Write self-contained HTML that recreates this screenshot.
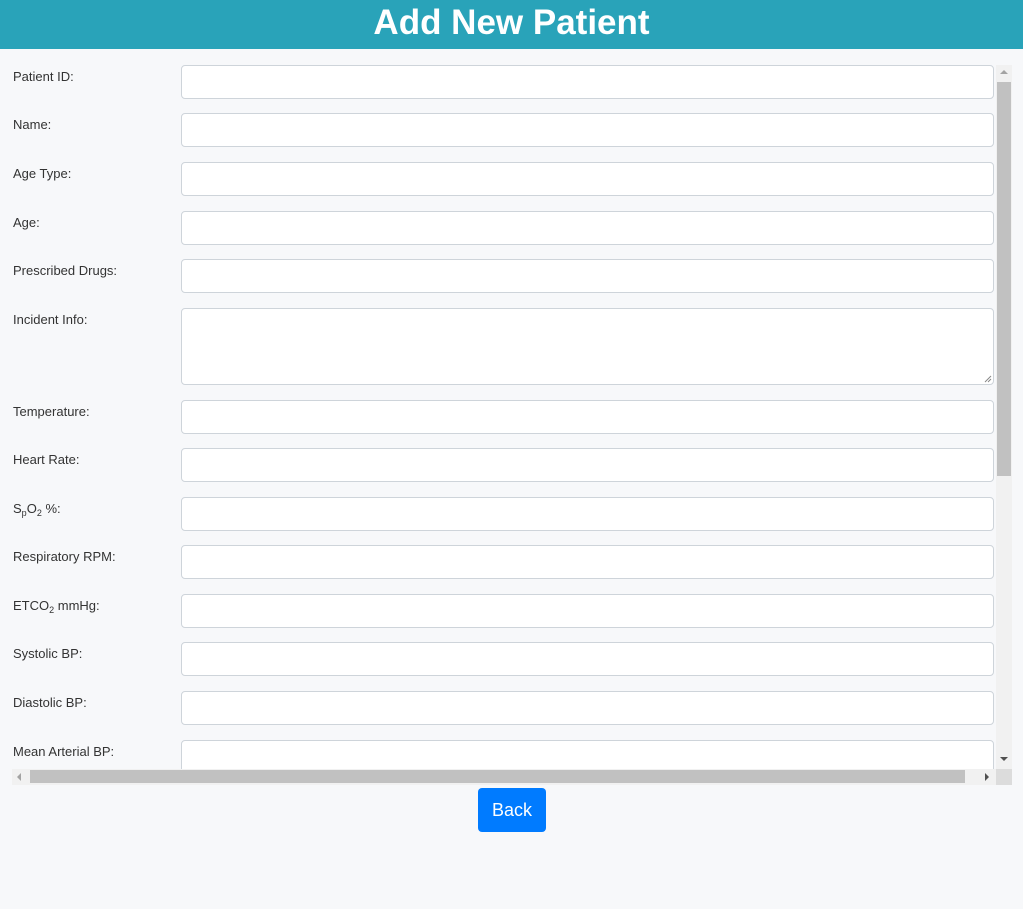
<!DOCTYPE html>
<html><head><meta charset="utf-8"><style>
*{box-sizing:border-box;margin:0;padding:0}
body{width:1023px;height:909px;background:#f7f8fa;font-family:"Liberation Sans",sans-serif;position:relative;overflow:hidden;color:#222}
.hd{position:absolute;left:0;top:0;width:1023px;height:49px;background:#29a3b9;color:#fff;font-weight:bold;font-size:35px;text-align:center;line-height:46px}
.box{position:absolute;left:12px;top:65px;width:984px;height:704px;overflow:hidden}
.l{position:absolute;left:1px;font-size:13px;color:#333}
.i{position:absolute;left:169px;width:813px;height:34px;background:#fff;border:1px solid #ced4da;border-radius:4px}
.vs{position:absolute;left:996px;top:65px;width:16px;height:704px;background:#f1f1f1}
.hs{position:absolute;left:12px;top:769px;width:984px;height:16px;background:#f1f1f1}
.cr{position:absolute;left:996px;top:769px;width:16px;height:16px;background:#dcdcdc}
.btn{position:absolute;left:478px;top:788px;width:68px;height:44px;background:#007bff;color:#fff;border-radius:4px;font-size:18px;text-align:center;line-height:44px}
sub{font-size:9px;vertical-align:-3px}
</style></head><body>
<div class="hd">Add New Patient</div>
<div class="box">
<div class="l" style="top:4px">Patient ID:</div><div class="i" style="top:0"></div>
<div class="l" style="top:52px">Name:</div><div class="i" style="top:48px"></div>
<div class="l" style="top:101px">Age Type:</div><div class="i" style="top:97px"></div>
<div class="l" style="top:150px">Age:</div><div class="i" style="top:146px"></div>
<div class="l" style="top:198px">Prescribed Drugs:</div><div class="i" style="top:194px"></div>
<div class="l" style="top:247px">Incident Info:</div><div class="i" style="top:243px;height:77px"><svg style="position:absolute;right:1px;bottom:1px" width="8" height="8"><path d="M7 1L1 7M7 4L4 7" stroke="#888" stroke-width="1"/></svg></div>
<div class="l" style="top:339px">Temperature:</div><div class="i" style="top:335px"></div>
<div class="l" style="top:387px">Heart Rate:</div><div class="i" style="top:383px"></div>
<div class="l" style="top:436px">S<sub>p</sub>O<sub>2</sub> %:</div><div class="i" style="top:432px"></div>
<div class="l" style="top:484px">Respiratory RPM:</div><div class="i" style="top:480px"></div>
<div class="l" style="top:533px">ETCO<sub>2</sub> mmHg:</div><div class="i" style="top:529px"></div>
<div class="l" style="top:581px">Systolic BP:</div><div class="i" style="top:577px"></div>
<div class="l" style="top:630px">Diastolic BP:</div><div class="i" style="top:626px"></div>
<div class="l" style="top:679px">Mean Arterial BP:</div><div class="i" style="top:675px"></div>
</div>
<div class="vs"><div style="position:absolute;left:1px;top:17px;width:14px;height:394px;background:#c1c1c1"></div>
<div style="position:absolute;left:4px;top:5px;border:4px solid transparent;border-bottom-color:#a3a3a3;border-top:0"></div>
<div style="position:absolute;left:4px;top:692px;border:4px solid transparent;border-top-color:#505050;border-bottom:0"></div></div>
<div class="hs"><div style="position:absolute;left:18px;top:1px;width:935px;height:13px;background:#c1c1c1"></div>
<div style="position:absolute;left:5px;top:4px;border:4px solid transparent;border-right-color:#a3a3a3;border-left:0"></div>
<div style="position:absolute;left:973px;top:4px;border:4px solid transparent;border-left-color:#505050;border-right:0"></div></div>
<div class="cr"></div>
<div class="btn">Back</div>
</body></html>
